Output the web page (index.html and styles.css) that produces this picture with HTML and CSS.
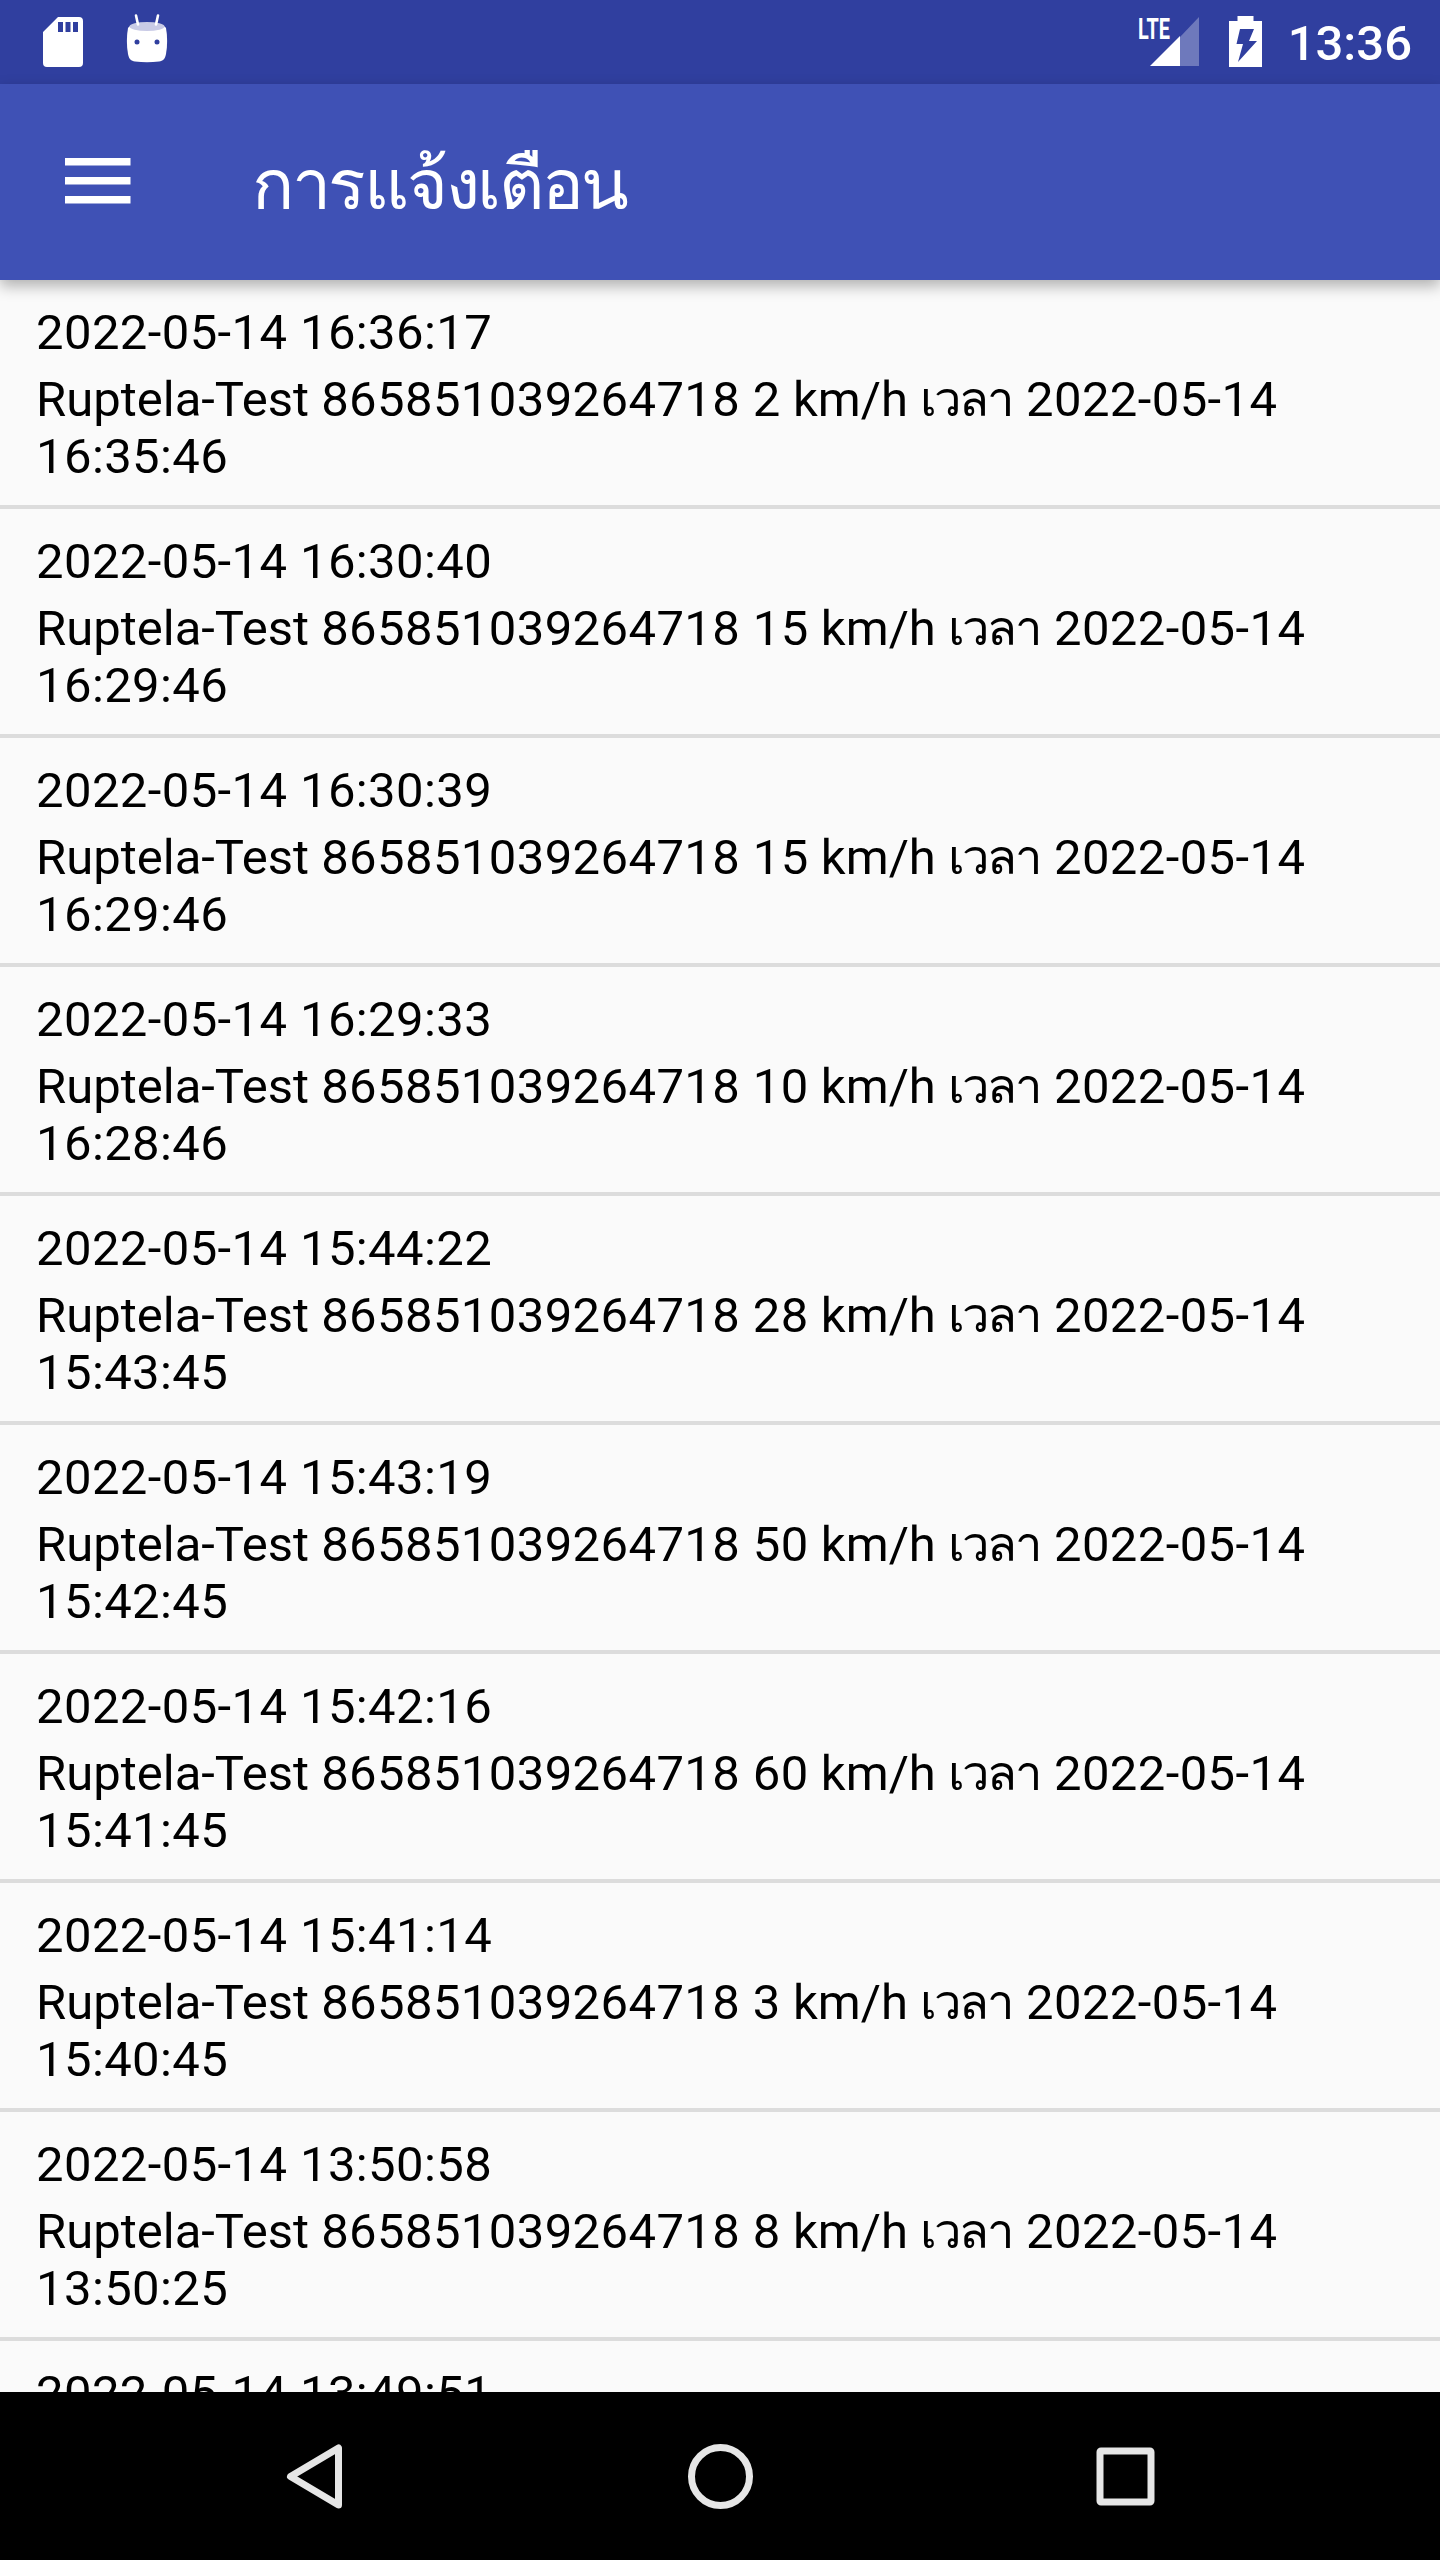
FILE: index.html
```html
<!DOCTYPE html>
<html lang="th">
<head>
  <meta charset="UTF-8" />
  <meta name="viewport" content="width=device-width, initial-scale=1.0"/>
  <title>การแจ้งเตือน</title>
  <link rel="stylesheet" href="styles.css">
</head>
<body>
  <div class="status-bar">
    <svg class="icon-sd" width="40" height="50" viewBox="0 0 40 50">
      <path fill="#fff" fill-rule="evenodd" d="M15 0h21a4 4 0 0 1 4 4v42a4 4 0 0 1-4 4H4a4 4 0 0 1-4-4V15zM15 5v10h5V5zM22.500 5v10h5V5zM30 5v10h5V5z"/>
    </svg>
    <svg class="icon-droid" width="42" height="50" viewBox="0 0 42 50">
      <path fill="#fff" d="M2 14C.5 22 .5 32 2 40c1 5 3 7 7 7.500 8 1 16 1 24 0 4-.5 6-2.500 7-7.500 1.500-8 1.500-18 0-26-3-6-35-6-38 0z"/>
      <ellipse cx="21" cy="12.500" rx="17.500" ry="4.500" fill="#c9cbe6"/>
      <path d="M10 1.500l2 9M32 1.500l-2 9" stroke="#fff" stroke-width="2.600" stroke-linecap="round"/>
      <circle cx="11" cy="28" r="2.500" fill="#303f9f"/>
      <circle cx="31" cy="28" r="2.500" fill="#303f9f"/>
    </svg>
    <div class="status-right">
      <svg class="icon-signal" width="62" height="50" viewBox="0 0 62 50">
        <text class="lte" x="0" y="22" textLength="32" lengthAdjust="spacingAndGlyphs">LTE</text>
        <path fill="#fff" fill-opacity=".3" d="M42 49V20L61 0v49z"/>
        <path fill="#fff" d="M12 49l30-30v30z"/>
      </svg>
      <svg class="icon-battery" width="33" height="51" viewBox="0 0 33 51">
        <path fill="#fff" fill-rule="evenodd" d="M8.500 0h16v5H33v46H0V5h8.500zM11 13L7.500 28H14L9 46l19-21h-8l5-12z"/>
      </svg>
      <span class="clock">13:36</span>
    </div>
  </div>

  <header class="toolbar">
    <svg class="menu" width="66" height="46" viewBox="0 0 66 46">
      <path fill="#fff" d="M0 0h65.500v7.500H0zM0 19h65.500v7.500H0zM0 38h65.500v7.500H0z"/>
    </svg>
    <h1>การแจ้งเตือน</h1>
  </header>

  <main class="list">
    <div class="item">
      <p class="date">2022-05-14 16:36:17</p>
      <p class="detail">Ruptela-Test <span class="num">865851039264718 2</span> km/h <span class="th">เวลา</span> <span class="num">2022-05-14<br>16:35:46</span></p>
    </div>
    <div class="item">
      <p class="date">2022-05-14 16:30:40</p>
      <p class="detail">Ruptela-Test <span class="num">865851039264718 15</span> km/h <span class="th">เวลา</span> <span class="num">2022-05-14<br>16:29:46</span></p>
    </div>
    <div class="item">
      <p class="date">2022-05-14 16:30:39</p>
      <p class="detail">Ruptela-Test <span class="num">865851039264718 15</span> km/h <span class="th">เวลา</span> <span class="num">2022-05-14<br>16:29:46</span></p>
    </div>
    <div class="item">
      <p class="date">2022-05-14 16:29:33</p>
      <p class="detail">Ruptela-Test <span class="num">865851039264718 10</span> km/h <span class="th">เวลา</span> <span class="num">2022-05-14<br>16:28:46</span></p>
    </div>
    <div class="item">
      <p class="date">2022-05-14 15:44:22</p>
      <p class="detail">Ruptela-Test <span class="num">865851039264718 28</span> km/h <span class="th">เวลา</span> <span class="num">2022-05-14<br>15:43:45</span></p>
    </div>
    <div class="item">
      <p class="date">2022-05-14 15:43:19</p>
      <p class="detail">Ruptela-Test <span class="num">865851039264718 50</span> km/h <span class="th">เวลา</span> <span class="num">2022-05-14<br>15:42:45</span></p>
    </div>
    <div class="item">
      <p class="date">2022-05-14 15:42:16</p>
      <p class="detail">Ruptela-Test <span class="num">865851039264718 60</span> km/h <span class="th">เวลา</span> <span class="num">2022-05-14<br>15:41:45</span></p>
    </div>
    <div class="item">
      <p class="date">2022-05-14 15:41:14</p>
      <p class="detail">Ruptela-Test <span class="num">865851039264718 3</span> km/h <span class="th">เวลา</span> <span class="num">2022-05-14<br>15:40:45</span></p>
    </div>
    <div class="item">
      <p class="date">2022-05-14 13:50:58</p>
      <p class="detail">Ruptela-Test <span class="num">865851039264718 8</span> km/h <span class="th">เวลา</span> <span class="num">2022-05-14<br>13:50:25</span></p>
    </div>
    <div class="item">
      <p class="date">2022-05-14 13:49:51</p>
    </div>
  </main>

  <nav class="nav-bar">
    <svg width="70" height="70" viewBox="0 0 70 70">
      <path d="M58.500 7v57L10.500 35.500z"/>
    </svg>
    <svg width="70" height="70" viewBox="0 0 70 70">
      <circle cx="35.500" cy="35.500" r="29"/>
    </svg>
    <svg width="70" height="70" viewBox="0 0 70 70">
      <rect x="10" y="10" width="51" height="51" rx="1"/>
    </svg>
  </nav>
</body>
</html>
```
FILE: styles.css
```css
* {
  box-sizing: border-box;
}

body {
  margin: 0;
  width: 1440px;
  height: 2560px;
  display: flex;
  flex-direction: column;
  overflow: hidden;
  background: #fafafa;
  color: #000;
  font-family: Roboto, "Noto Sans", sans-serif;
}

svg {
  display: block;
  flex: none;
  overflow: visible;
}

.status-bar {
  height: 84px;
  flex: none;
  display: flex;
  align-items: flex-start;
  padding: 0 28px 0 43px;
  background: #303f9f;
  color: #fff;
}

.icon-sd {
  margin-top: 17px;
}

.icon-droid {
  margin: 14px 0 0 43px;
}

.status-right {
  display: flex;
  margin-left: auto;
}

.icon-signal {
  margin-top: 17px;
}

.lte {
  font-size: 30px;
  font-weight: 700;
  fill: #fff;
}

.icon-battery {
  margin: 16px 26px 0 29px;
}

.clock {
  margin-top: 15px;
  font-size: 49px;
  font-weight: 500;
  line-height: 57px;
}

.toolbar {
  position: relative;
  height: 196px;
  flex: none;
  display: flex;
  align-items: center;
  padding: 0 65px 0;
  background: #3f51b5;
  color: #fff;
  box-shadow: 0 6px 14px rgba(0, 0, 0, 0.3);
}

.menu {
  margin-bottom: 3px;
}

h1 {
  margin: 6px 0 0 121px;
  font-size: 70px;
  font-weight: 400;
  line-height: 90px;
  letter-spacing: -2.3px;
  white-space: nowrap;
}

.list {
  flex: 1;
  min-height: 0;
  overflow: hidden;
}

.item {
  height: 229px;
  padding: 24px 36px 0;
  border-bottom: 4px solid #dcdcdc;
  font-size: 49px;
  line-height: 57px;
  white-space: nowrap;
}

.item p {
  margin: 0;
}

.date,
.num {
  letter-spacing: 0.4px;
}

.item .detail {
  margin-top: 10px;
}

.th {
  margin-right: 2px;
  line-height: 1;
  letter-spacing: -2.8px;
}

.nav-bar {
  height: 168px;
  flex: none;
  display: flex;
  justify-content: center;
  gap: 335px;
  align-items: center;
  background: #000;
}

.nav-bar svg {
  fill: none;
  stroke: #e6e6e6;
  stroke-width: 7;
  stroke-linejoin: round;
}
```
